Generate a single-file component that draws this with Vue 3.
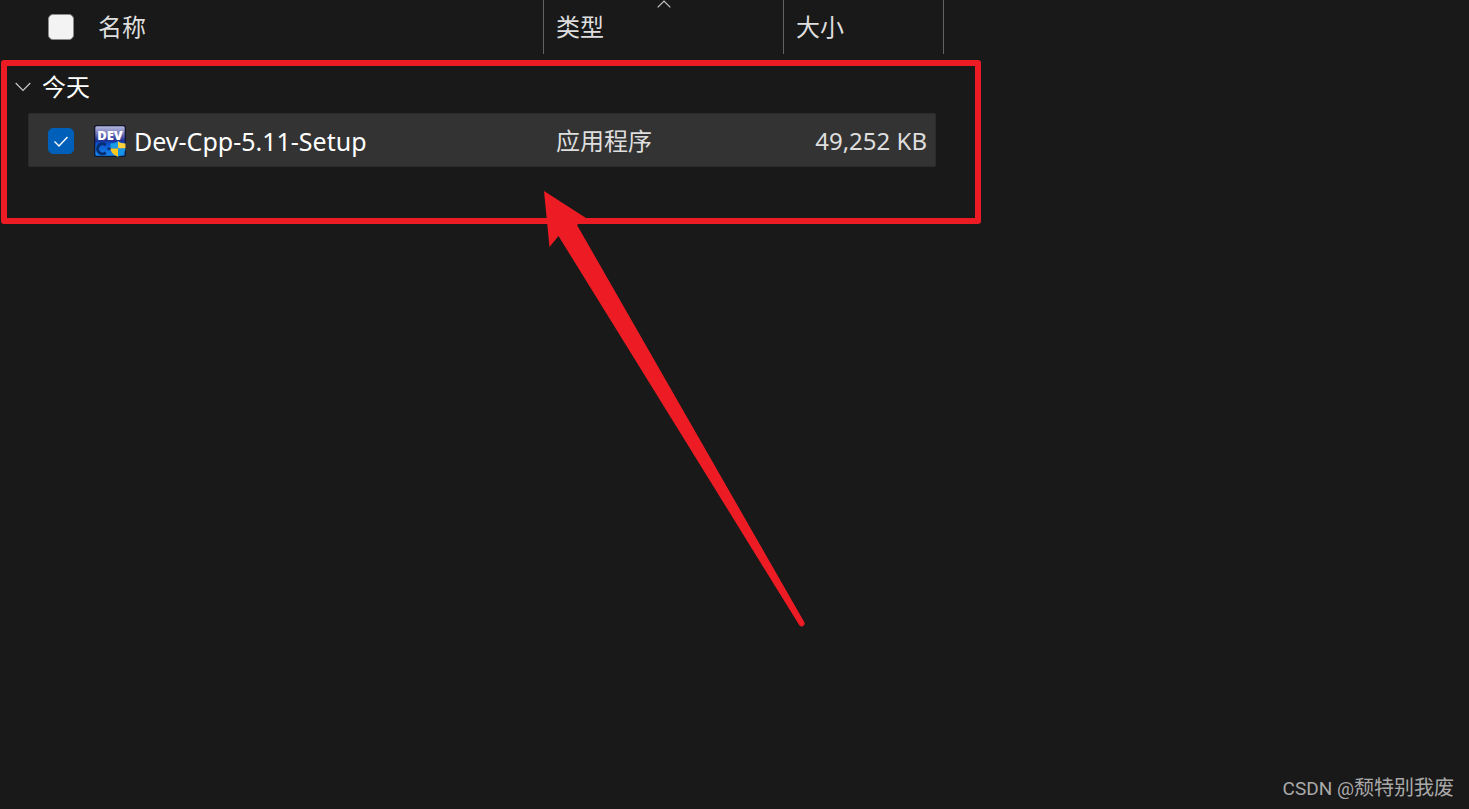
<script setup>
import { ref } from 'vue'

const selectAll = ref(false)
const files = ref([
  { name: 'Dev-Cpp-5.11-Setup', type: '应用程序', size: '49,252 KB', checked: true },
])
</script>

<template>
  <main class="explorer">
    <table class="files">
      <colgroup>
        <col class="col-gutter" />
        <col class="col-name" />
        <col class="col-type" />
        <col class="col-size" />
        <col class="col-edge" />
        <col />
      </colgroup>
      <thead>
        <tr>
          <td></td>
          <th scope="col">
            <div class="name-cell head">
              <input v-model="selectAll" class="box" type="checkbox" aria-label="全选" />
              <span>名称</span>
            </div>
          </th>
          <th scope="col" class="sorted">
            类型
            <svg class="sort" viewBox="0 0 14 8" aria-hidden="true">
              <path d="M0.7 7.3 7 1l6.3 6.3" />
            </svg>
          </th>
          <th scope="col" colspan="2">大小</th>
          <td></td>
        </tr>
      </thead>
      <tbody>
        <tr class="group">
          <th colspan="6" scope="rowgroup">
            <button type="button" class="toggle">
              <svg class="chevron" viewBox="0 0 16 10" aria-hidden="true">
                <path d="M0.7 1 8 8.4 15.3 1" />
              </svg>
              今天
            </button>
          </th>
        </tr>
        <tr v-for="file in files" :key="file.name" class="file">
          <td></td>
          <td class="cell first">
            <div class="name-cell">
              <span class="tick-wrap">
                <input v-model="file.checked" class="box" type="checkbox" :aria-label="file.name" />
                <svg v-if="file.checked" class="tick" viewBox="0 0 26 26" aria-hidden="true">
                  <path d="M6.5 13.5 11 18 19.5 9" />
                </svg>
              </span>
              <svg class="app-icon" viewBox="0 0 32 32" aria-hidden="true">
                <defs>
                  <linearGradient id="tile" x1="0" y1="0" x2="0" y2="1">
                    <stop offset="0" stop-color="#b4b7dc" />
                    <stop offset="0.25" stop-color="#7379bb" />
                    <stop offset="0.5" stop-color="#1b2c92" />
                    <stop offset="0.56" stop-color="#0c4cc4" />
                    <stop offset="1" stop-color="#1688f4" />
                  </linearGradient>
                </defs>
                <rect x="0" y="0" width="32" height="32" rx="2.5" fill="#11162c" />
                <rect x="1.3" y="1.3" width="29.4" height="29.4" rx="1.5" fill="url(#tile)" />
                <text x="16" y="15" class="dev">DEV</text>
                <path d="M11.8 20a5 5 0 1 0 0 7.600" fill="none" stroke="#062f70" stroke-width="3" />
                <path d="M13.500 23.800h4.500" stroke="#062f70" stroke-width="2.400" />
                <path d="M24 16c-2 1.800-4.500 2.500-7.500 2.500V23.500H24z" fill="#1b9de8" />
                <path d="M24 16c2 1.800 4.500 2.500 7.500 2.500V23.500H24z" fill="#ffd23a" />
                <path d="M16.500 23.500c.4 4 3.200 6.500 7.500 8.200V23.500z" fill="#ffc91f" />
                <path d="M31.500 23.500c-.4 4-3.200 6.500-7.500 8.200V23.500z" fill="#1795e6" />
              </svg>
              <span class="file-name">{{ file.name }}</span>
            </div>
          </td>
          <td class="cell type">{{ file.type }}</td>
          <td class="cell size">{{ file.size }}</td>
          <td></td>
          <td></td>
        </tr>
      </tbody>
    </table>

    <div class="frame"></div>
    <svg class="arrow" viewBox="0 0 262 438" aria-hidden="true">
      <path d="M0 0 42 27 33 34 260.500 431.500A3 3 0 0 1 255.500 434.500L14.500 45 5.500 56Z" />
    </svg>

    <footer class="credit"><span class="site">CSDN @</span>颓特别我废</footer>
  </main>
</template>

<style>
body {
  background: #191919;
}
</style>

<style scoped>
.explorer {
  position: relative;
  display: flex;
  flex-direction: column;
  justify-content: space-between;
  min-height: 100vh;
  box-sizing: border-box;
  background: #191919;
  color: #dedede;
  font-family: "Noto Sans", "Noto Sans CJK SC", sans-serif;
  font-size: 24px;
  line-height: 32px;
}

.files {
  width: 100%;
  table-layout: fixed;
  border-collapse: separate;
  border-spacing: 0;
}

.col-gutter { width: 28px; }
.col-name { width: 516px; }
.col-type { width: 240px; }
.col-size { width: 152px; }
.col-edge { width: 8px; }

th,
td {
  padding: 0;
  font-weight: 400;
  text-align: left;
  white-space: nowrap;
}

thead th {
  position: relative;
  height: 54px;
  padding-left: 12px;
  box-sizing: border-box;
  border-right: 1px solid #636363;
}

thead th:nth-child(2) {
  padding-left: 0;
}

.sort {
  position: absolute;
  top: 0;
  left: calc(50% - 7px);
  width: 14px;
  height: 8px;
}

.sort path,
.chevron path {
  fill: none;
  stroke: #c8c8c8;
  stroke-width: 1.2;
}

.name-cell {
  display: flex;
  align-items: center;
  padding-left: 20px;
}

.head {
  gap: 24px;
}

.box {
  appearance: none;
  display: block;
  width: 26px;
  height: 26px;
  margin: 0;
  box-sizing: border-box;
  border: 1px solid #8a8a8a;
  border-radius: 5px;
  background: #f3f3f3;
}

.box:checked {
  border-color: #005fb8;
  background: #005fb8;
}

.tick-wrap {
  position: relative;
  margin-right: 20px;
}

.tick {
  position: absolute;
  inset: 0;
  width: 26px;
  height: 26px;
  pointer-events: none;
}

.tick path {
  fill: none;
  stroke: #fff;
  stroke-width: 1.4;
}

.group th {
  height: 59px;
  padding: 6px 0 0 15px;
  box-sizing: border-box;
}

.toggle {
  display: flex;
  align-items: center;
  gap: 11px;
  padding: 0;
  border: 0;
  background: none;
  color: #fff;
  font: inherit;
}

.chevron {
  width: 16px;
  height: 10px;
}

.cell {
  height: 54px;
  padding-top: 2px;
  box-sizing: border-box;
  border: solid #2b2b2b;
  border-width: 1px 0;
  background: #333;
}

.cell.first {
  border-left-width: 1px;
  border-radius: 2px 0 0 2px;
}

.cell.first .name-cell {
  padding-left: 19px;
}

.type {
  padding-left: 12px;
}

.size {
  padding-right: 8px;
  border-right-width: 1px;
  border-radius: 0 2px 2px 0;
  text-align: right;
}

.app-icon {
  width: 32px;
  height: 32px;
  margin-right: 8px;
}

.dev {
  fill: #fff;
  font-family: "Open Sans", sans-serif;
  font-size: 13px;
  font-weight: 800;
  text-anchor: middle;
}

.file-name {
  color: #fff;
  font-size: 25px;
}

.frame {
  position: absolute;
  top: 60px;
  left: 1px;
  width: 980px;
  height: 164px;
  box-sizing: border-box;
  border: 6px solid #ed1c24;
  border-radius: 3px;
  pointer-events: none;
}

.arrow {
  position: absolute;
  top: 191px;
  left: 544px;
  width: 262px;
  height: 438px;
  pointer-events: none;
}

.arrow path {
  fill: #ed1c24;
}

.credit {
  padding: 0 15px 8px;
  color: #a9a9a9;
  font-family: Roboto, "Noto Sans CJK SC", sans-serif;
  font-size: 20px;
  line-height: 24px;
  text-align: right;
}

.site {
  font-size: 19px;
}
</style>
